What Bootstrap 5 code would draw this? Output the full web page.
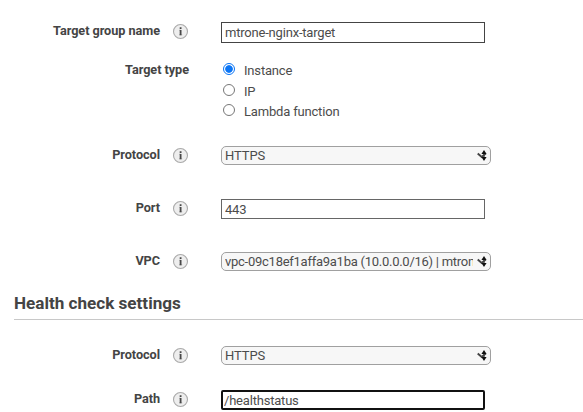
<!DOCTYPE html>
<html lang="en">
<head>
<meta charset="utf-8">
<meta name="viewport" content="width=device-width, initial-scale=1">
<title>Target group</title>
<link href="https://cdn.jsdelivr.net/npm/bootstrap@5.3.0/dist/css/bootstrap.min.css" rel="stylesheet">
<style>
body{font-family:Roboto,"Liberation Sans",sans-serif;font-size:13px;line-height:20px;color:#444;background:#fff;overflow:hidden}
.field{display:grid;grid-template-columns:160px 12px 17px 32px 270px;grid-template-rows:20px;height:20px;align-items:center}
.field-label{font-weight:700;text-align:right;font-size:12.7px;line-height:18px;letter-spacing:-.05px;white-space:nowrap;padding-bottom:2px}
.first-field{margin-top:22px}
.type-label{grid-column:1/4;line-height:20px;padding-bottom:0}
.info{display:block;width:17px;height:17px;margin-top:-1px}
.form-control.entry{width:264px;height:20px;min-height:0;padding:0 3px;border:1px solid #666;border-radius:0;font-size:13px;line-height:18px;color:#4c4c4c;letter-spacing:-.2px;box-shadow:none}
.form-control.entry.name{height:21px;border-color:#444}
.form-control.entry.active{border:2px solid #111;border-radius:2px;padding:0 2px 0 1px}
.form-select.pick{width:270px;height:19px;padding:0 17px 0 3px;border:1px solid #a0a0a0;border-radius:5px;background:#f7f7f7;font-size:13px;line-height:17px;color:#4c4c4c;text-overflow:clip;letter-spacing:-.1px}
.form-select.pick.long{letter-spacing:-.26px}
.pick-wrap{position:relative;margin-top:-2px}
.arrows{position:absolute;right:3px;top:3px;width:11px;height:13px}
.opts{height:61px;margin-top:18px;align-items:start}
.opt{display:flex;align-items:center;height:20.5px;letter-spacing:-.18px;color:#4c4c4c}
.opt-text{padding-top:2px}
.form-check-input.dot{width:12px;height:12px;margin:-2px 9px 0 2px;border:1px solid #777;flex:none;box-shadow:none}
.form-check-input.dot:checked{background:radial-gradient(circle,#0b75f5 0 3.4px,#fff 4.2px 5px);border-color:#0b75f5}
.heading{font-size:17.1px;line-height:22px;font-weight:700;margin:20px 0 26px 14px;padding-bottom:5px;border-bottom:1px solid #c8c8c8}
.gap-m{margin-top:25px}
.gap-s{margin-top:24px}
.gap-a{margin-top:33px}
</style>
<script src="https://cdn.jsdelivr.net/npm/bootstrap@5.3.0/dist/js/bootstrap.bundle.min.js"></script>
</head>
<body>
<svg class="d-none">
<symbol id="info" viewBox="0 0 17 17"><circle cx="8.5" cy="8.5" r="7" fill="#eee" stroke="#aaa" stroke-width="1.1"/><path d="M7.2 7.2h1.3M7 11.8h3.2" fill="none" stroke="#999" stroke-width=".7"/><path d="M8.6 4.2v1.7M8.6 7v5.2" stroke="#484848" stroke-width="1.8"/></symbol>
<symbol id="arrows" viewBox="0 0 11 13"><path d="M.7 4.5 4.7 8 8.7 4.5" fill="none" stroke="#444" stroke-width="1.9"/><path d="M7 1 9.6 5H4.4zM7 12 4.4 8h5.2z" fill="#111"/><path d="M7 5v3" stroke="#444" stroke-width="1.3"/></symbol>
</svg>
<main>
<div class="field first-field"><label class="field-label" for="n">Target group name</label><span></span><svg class="info"><use href="#info"/></svg><span></span><input id="n" class="form-control entry name" value="mtrone-nginx-target"></div>
<div class="field opts"><span class="field-label type-label">Target type</span><span></span>
<div><label class="opt"><input class="form-check-input dot" type="radio" name="t" checked><span class="opt-text">Instance</span></label><label class="opt"><input class="form-check-input dot" type="radio" name="t"><span class="opt-text">IP</span></label><label class="opt"><input class="form-check-input dot" type="radio" name="t"><span class="opt-text">Lambda function</span></label></div></div>
<div class="field gap-m"><label class="field-label" for="p">Protocol</label><span></span><svg class="info"><use href="#info"/></svg><span></span><div class="pick-wrap"><select id="p" class="form-select pick"><option>HTTPS</option></select><svg class="arrows"><use href="#arrows"/></svg></div></div>
<div class="field gap-a"><label class="field-label" for="o">Port</label><span></span><svg class="info"><use href="#info"/></svg><span></span><input id="o" class="form-control entry" value="443"></div>
<div class="field gap-a"><label class="field-label" for="v">VPC</label><span></span><svg class="info"><use href="#info"/></svg><span></span><div class="pick-wrap"><select id="v" class="form-select pick long"><option>vpc-09c18ef1affa9a1ba (10.0.0.0/16) | mtrone-vpc</option></select><svg class="arrows"><use href="#arrows"/></svg></div></div>
<h2 class="heading">Health check settings</h2>
<div class="field"><label class="field-label" for="h">Protocol</label><span></span><svg class="info"><use href="#info"/></svg><span></span><div class="pick-wrap"><select id="h" class="form-select pick"><option>HTTPS</option></select><svg class="arrows"><use href="#arrows"/></svg></div></div>
<div class="field gap-s"><label class="field-label" for="a">Path</label><span></span><svg class="info"><use href="#info"/></svg><span></span><input id="a" class="form-control entry active" value="/healthstatus"></div>
</main>
</body>
</html>
